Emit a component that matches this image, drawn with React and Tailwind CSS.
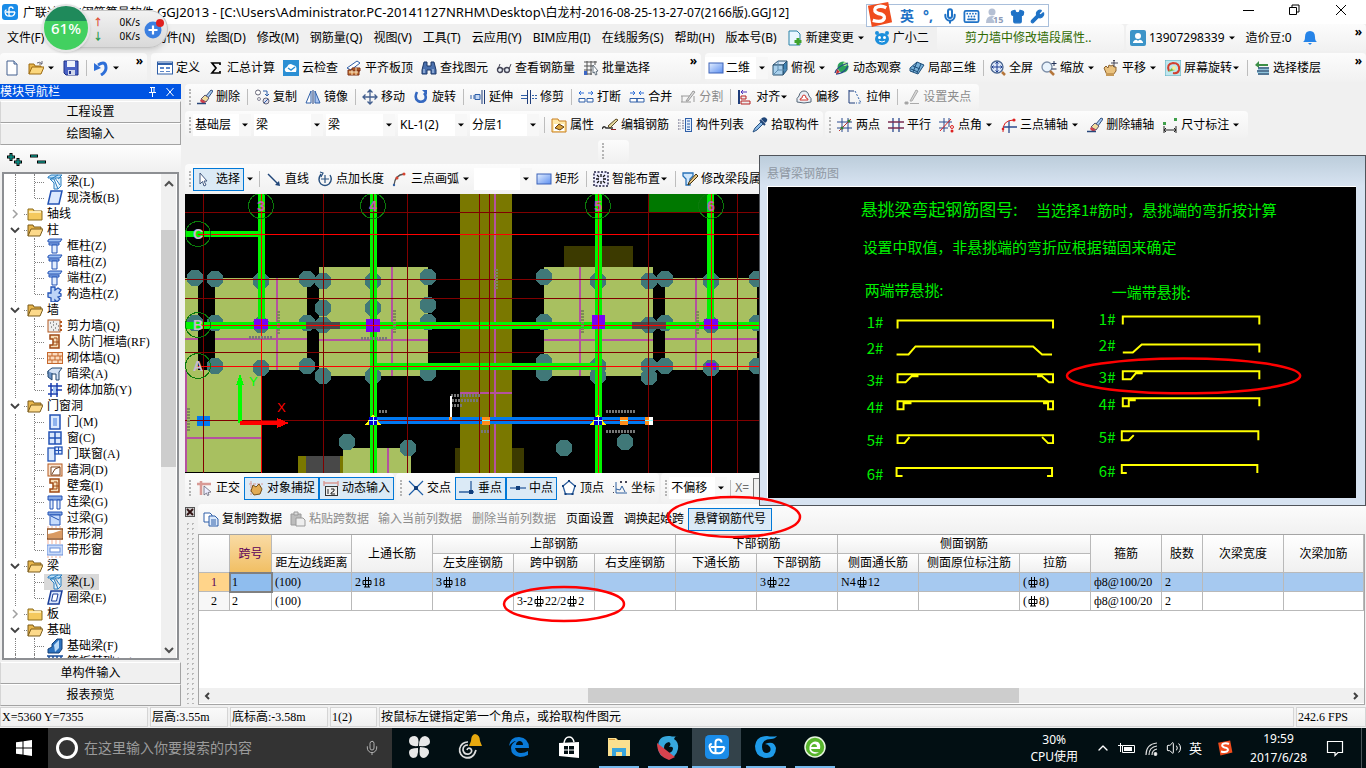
import React, { useState } from 'react';
import { Mic, Keyboard, Shirt, Wrench, Volume2, ChevronUp } from 'lucide-react';

const B = '#2f5fa8';
const N = '#1f3d7a';

// 16x16 toolbar drawings
const icons = {
    app: <><rect width="16" height="16" rx="3" fill="#1a8ce8" /><path d="M7 12V5q0-2 2-2t2 2M4 8h9M3 8q0-2 1.500-2M3 8q1 5 5 4 4 1 5-4" stroke="#fff" strokeWidth="1.300" fill="none" /></>,
    page: <><path d="M3 1h7l3 3v11H3z" fill="#fff" stroke="#44618f" /><path d="M10 1v3h3" fill="#cfe0f5" stroke="#44618f" /></>,
    open: <><path d="M1 14V4h5l1 2h6v2" fill="#e8b64c" stroke="#9c6a12" /><path d="M1 14l3-7h12l-3 7z" fill="#fbd77d" stroke="#9c6a12" /><path d="M9 3q3-2 5 1M14 1v3h-3" stroke="#667" fill="none" /></>,
    save: <><path d="M1 1h14v14H3l-2-2z" fill="#4a62c4" stroke="#1d2f85" /><path d="M4 1h8v6H4z" fill="#eef2fb" /><path d="M5 10h7v5H5z" fill="#cfd6ea" /><path d="M6 11h2v3H6z" fill="#26358c" /></>,
    undo: <><path d="M5 5q8-5 8 3 0 4-5 7" fill="none" stroke="#2e6fd8" strokeWidth="3" /><path d="M1 3v8l7-3z" fill="#2e6fd8" /></>,
    define: <><rect x=".5" y="2" width="15" height="12" fill="#fff" stroke={B} /><path d="M1 3h14v2H1z" fill={B} /><path d="M3 7h4v2H3zM3 11h4v1H3zM9 7h4v2H9zM9 11h4v1H9z" fill="#5b86c9" /></>,
    sigma: <path d="M12 5V3H4l4 5-4 5h8v-2" fill="none" stroke="#000" strokeWidth="1.700" />,
    cloud: <><rect width="16" height="16" fill="#2b8fd4" /><path d="M3 12q-3-3 1-5 2-5 6-2 5 1 3 7z" fill="#fff" /><path d="M5 8l3 2 4-3" stroke="#2b8fd4" strokeWidth="1.500" fill="none" /></>,
    align: <><path d="M1 8L11 1l3 2-9 7z" fill="#fff" stroke={B} /><path d="M2 10h11v5H2zM6 8h8v3H6z" fill="#c87a3c" stroke="#7a2d10" /><path d="M3 12h9M6 10v5M10 8v7" stroke="#fbe3bd" /></>,
    find: <><path d="M3 2h3v4h4V2h3l2 8v4h-5v-4H6v4H1v-4z" fill="#4a70ad" stroke="#1b3766" /><path d="M3 9v4M12 9v4" stroke="#c8daf4" /></>,
    glasses: <><circle cx="4" cy="10" r="2.500" fill="#e6edf5" stroke="#445" strokeWidth="1.400" /><circle cx="11" cy="10" r="2.500" fill="#e6edf5" stroke="#445" strokeWidth="1.400" /><path d="M6 9h3M2 9L4 4M13 9l2-5" stroke="#445" fill="none" /></>,
    batch: <><path d="M1 2h13M1 6h9M1 10h8M1 14h8M4 1v14M8 1v14M12 1v4" stroke="#555" /><path d="M1 11h3v4H1z" fill="#3b66c4" /><path d="M10 5l5 6-2 .500 1 3-1.500.500-1-3-1.500 1z" fill="#fff" stroke="#456" strokeWidth=".8" /></>,
    rect: <><defs><linearGradient id="rg" x1="0" y1="0" x2="1" y2="1"><stop offset="0" stopColor="#e4efff" /><stop offset="1" stopColor="#5d8ff0" /></linearGradient></defs><rect x="1" y="3" width="14" height="10" fill="url(#rg)" stroke="#3d63b8" /></>,
    cube: <><path d="M1 5l5-4h9l-4 4z" fill="#dcebfa" stroke="#28506f" /><path d="M11 5l4-4v9l-4 5z" fill="#3f83b5" stroke="#28506f" /><path d="M1 5h10v10H1z" fill="#a9d0ec" stroke="#28506f" /><path d="M6 1v9h9M6 10l-5 5" stroke="#5f8db0" fill="none" /></>,
    orbit: <><circle cx="9" cy="7" r="5.500" fill="#2ca35a" /><circle cx="11" cy="4" r="2" fill="#bdf0a0" /><path d="M1 13q1-6 13-10M2 14q8 0 12-8" stroke="#274a8a" fill="none" strokeWidth="1.300" /><path d="M3 9l3 3-4 2z" fill="#c33" /></>,
    local3d: <><path d="M1 8l7-6 7 3-6 9-8-3z" fill="#78b0d8" stroke="#1e4e79" /><path d="M4 6l7 3M8 2l-4 10M12 4L8 13M2 9l7 3" stroke="#1e4e79" /></>,
    full: <><circle cx="7" cy="7" r="6" fill="#dfeafa" stroke="#4a6590" strokeWidth="1.300" /><path d="M12 12l3 3" stroke="#b5763b" strokeWidth="2.500" /><path d="M7 2v10M2 7h10M5.500 3.500L7 2l1.500 1.500M5.500 10.500L7 12l1.500-1.500M3.500 5.500L2 7l1.500 1.500M10.500 5.500L12 7l-1.500 1.500" stroke="#1e3f94" fill="none" /></>,
    zoom: <><circle cx="6" cy="7" r="5" fill="#e9f3fc" stroke="#7d8fa8" strokeWidth="1.300" /><path d="M9 11l4 4" stroke="#b5763b" strokeWidth="2.500" /><path d="M13 1v5M10.500 3.500h5M10.500 9h5" stroke="#1f2e55" /></>,
    pan: <><path d="M1 8l2-2 2 2 1-3 2 1 2-1 1 2 2 0v4l-3 4H4z" fill="#eac27e" stroke="#8d6330" /><path d="M3 13h8v3H3z" fill="#c79a58" /><path d="M11 0v7M8 3h7M10 1l1-1 1 1" stroke="#445" fill="none" /></>,
    spin: <><rect width="16" height="16" fill="#bfe6ee" stroke="#5aaebf" /><path d="M4 11q-3-7 4-8 7 0 6 7-1 4-6 3" fill="none" stroke="#d3402f" strokeWidth="2" /><path d="M3 12l5-5 2 3z" fill="#78b83b" /><circle cx="9" cy="8" r="2" fill="#f7ee9a" /></>,
    floors: <><path d="M1 5l4-4v3h9v2H5v2z" fill="#3d8f47" /><path d="M4 8h11M3 11h12M4 14h11" stroke="#1f4f77" strokeWidth="1.600" /><path d="M4 9.500h11M3 12.500h12" stroke="#8fc4dc" /></>,
    erase: <><path d="M9 7l5-6 2 1-5 7z" fill="#a9c9ef" stroke="#32517f" /><path d="M4 10l4-4 4 3-3 4z" fill="#f1dc9c" stroke="#5a5470" /><path d="M4 10l-1 2 3 3 3-2z" fill="#d3404a" /><path d="M0 14.500h9" stroke="#28477a" strokeWidth="1.500" /></>,
    copy: <><circle cx="4" cy="3.500" r="2.500" fill="#fff" stroke="#667" /><circle cx="12" cy="12" r="3" fill="#dde" stroke="#667" /><circle cx="5" cy="10" r="1.500" fill="none" stroke="#889" /><path d="M9 2h4v4M11 5l2 2 2-2M14 10l-4 4" stroke={B} fill="none" /></>,
    mirror: <><path d="M6 2v12H1z" fill="#fff" stroke={B} /><path d="M10 2v12h5z" fill="#a9c4f0" stroke={B} /><path d="M8 1v14" stroke={N} /></>,
    move: <><path d="M8 1v14M1 8h14M5.500 3.500L8 1l2.500 2.500M5.500 12.500L8 15l2.500-2.500M3.500 5.500L1 8l2.500 2.500M12.500 5.500L15 8l-2.500 2.500" stroke="#435f8f" strokeWidth="1.300" fill="none" /></>,
    rotate: <><path d="M4 3Q1 9 5 12q4 2 7-1 2-4-1-7" fill="none" stroke="#3568c0" strokeWidth="2.600" /><path d="M9 1h5v5z" fill="#3568c0" /></>,
    extend: <><path d="M0 7h8M0 9h8" stroke={B} strokeDasharray="2 1" /><path d="M5 5.500h5v5H5z" fill="#c4d8f5" stroke={B} /><path d="M12 1v14M14.500 1v14" stroke={N} /></>,
    trim: <><path d="M0 6.500h7M0 9.500h7" stroke={B} /><path d="M6.500 1v14M9.500 1v14" stroke={N} /><path d="M11 6.500h5M11 9.500h5" stroke={B} strokeDasharray="2 1" /></>,
    brk: <><path d="M1 4h5M10 4h5M3 2L1 4l2 2M13 2l2 2-2 2" stroke="#2e6fd8" fill="none" /><path d="M1 9.500h6v3.500H1zM9 9.500h6v3.500H9z" fill="#fff" stroke={B} /></>,
    join: <><path d="M1 4h5M10 4h5M4 2l2 2-2 2M12 2l-2 2 2 2" stroke="#2e6fd8" fill="none" /><path d="M1 9.500h7v3.500H1zM8 9.500h7v3.500H8z" fill="#fff" stroke={B} /></>,
    split: <><path d="M1 7h9M1 13h10M2 7v6M14 7v6" stroke="#9a9a9a" /><path d="M6 12l7-10 2 1-7 9z" fill="#ddd" stroke="#9a9a9a" /></>,
    alignL: <><path d="M2 1v14" stroke={N} strokeWidth="2" /><path d="M4 3h6M6 1L4 3l2 2" stroke="#4a2fb8" fill="none" /><path d="M4 7h5v3H4zM4 12h9v3H4z" fill="#eee" stroke="#b52020" /></>,
    offset: <><path d="M8 2q4 0 5 5 3 2 2 6-7 2-14 0Q0 9 3 7q1-5 5-5z" fill="#e9eef5" stroke="#567" /><path d="M8 6q2 0 2 3 2 0 2 2H4q0-2 2-2 0-3 2-3z" fill="#fff" stroke="#d0342c" /></>,
    stretch: <><path d="M2 1v13h6M2 2h5" stroke={N} fill="none" /><path d="M8 2l6 12H9" stroke={B} strokeDasharray="2 1.500" fill="none" /></>,
    grip: <><path d="M6 12L12 1l2 1-6 10z" fill="#d8d8d8" stroke="#aaa" /><path d="M1 13h3v2H1zM6 14.500h9" fill="#999" stroke="#aaa" /></>,
    prop: <><path d="M1 2h6l1 2h7v11H1z" fill="#ffe9a8" stroke="#c87e20" /><path d="M3 7h10v7H3z" fill="#fff" /><path d="M4 11l4-4 5 3-4 3z" fill="#d8a23c" stroke="#5f3d10" /></>,
    editbar: <><path d="M0 12q2-4 4-1h7" stroke="#333" strokeWidth="1.500" fill="none" /><path d="M6 9L14 2l2 1-8 8z" fill="#e5d9a0" stroke="#5b4a23" /><path d="M9 12.500h5" stroke="#8b2020" /></>,
    list: <><path d="M1 3h3M1 6h3M1 9h3M1 12h3M6 3v10" stroke="#557" strokeDasharray="1.500 1" /><rect x="8.500" y="1.500" width="6" height="13" fill="#e2edfb" stroke={B} /><path d="M10 4h3M10 7h3M10 10h3M10 12.500h3" stroke={B} /></>,
    pick: <><path d="M10 1q3-2 5 1 1 2-2 4l-4-4z" fill="#1f4578" /><path d="M8 3l5 5" stroke="#1f4578" strokeWidth="2" /><path d="M9 5l2 2-6 6-4 2 2-4z" fill="#8ab9e6" stroke="#28507f" /></>,
    twopt: <><path d="M5 1v14M11 1v14M0 5h15M0 11h15" stroke="#2b4a8f" /><path d="M2 14L14 2" stroke="#b33" /><circle cx="5" cy="11" r="1.500" fill="#3a7a30" /><circle cx="12" cy="4" r="1.500" fill="#3a7a30" /></>,
    parallel: <><path d="M5 1v14M11 1v14" stroke="#2b4a8f" strokeWidth="1.300" /><path d="M0 5h16M0 11h16" stroke="#7a2d50" strokeWidth="1.300" /></>,
    ptangle: <><path d="M5 1v14M10 1v9M0 5h13M0 11h9" stroke="#2b4a8f" /><path d="M1 14L12 2" stroke="#d22" /><circle cx="13" cy="10" r="1.500" fill="none" stroke="#d22" /><circle cx="13" cy="14" r="1.500" fill="#d22" /></>,
    arc3: <><path d="M8 4v12M2 10h14" stroke="#2b4a8f" strokeWidth="1.300" /><path d="M2 15Q1 3 13 3" stroke="#d22" fill="none" /><circle cx="13" cy="3" r="1.600" fill="#d22" /><circle cx="2" cy="12" r="1.300" fill="#d22" /></>,
    dim: <><path d="M2 9v7M14 9v7M2 13h12M4 11l-2 2 2 2M12 11l2 2-2 2" stroke="#222" fill="none" /><path d="M1 5h3v3H1zM12 1h3v3h-3z" fill="#3fa04a" /></>,
    cursor: <path d="M3 2v11l2.500-2.500L7 15l2-1-2-4h3z" fill="#fff" stroke="#445a80" />,
    line: <><path d="M2 3l10 10" stroke="#1f4578" strokeWidth="1.400" /><path d="M14 15l-5-1 4-4z" fill="#1f4578" /></>,
    ptlen: <><path d="M4 3Q0 9 4 13q4 3 8 0 4-4 1-9" fill="none" stroke="#28507f" strokeWidth="1.400" /><path d="M8 4v8M4 8h8M3 1l3 1-2 4" stroke="#28507f" fill="none" strokeWidth="1.200" /></>,
    arcdraw: <><path d="M2 14Q3 4 12 3" fill="none" stroke="#555" strokeWidth="1.300" /><circle cx="12" cy="3" r="1.500" fill="#d8432f" /><circle cx="5" cy="7" r="1.500" fill="#d8432f" /><circle cx="2" cy="14" r="1.200" fill="#335f9f" /></>,
    smart: <><rect x="1" y="1" width="14" height="14" fill="#eef" stroke="#224" strokeWidth="1.500" strokeDasharray="2 1.500" /><path d="M4 4l2 2M12 4l-2 2M4 12l2-2M12 12l-2-2M8 3v3M8 10v3M3 8h3M10 8h3" stroke="#111" strokeWidth="1.300" /></>,
    beamedit: <><path d="M1 2h10v3L8 8v6H4V8L1 5z" fill="#cfe6fb" stroke="#2872b8" strokeWidth="1.300" /><path d="M7 11l7-8 2 2-7 7-3 2z" fill="#e8c784" stroke="#44320e" /></>,
    ortho: <><path d="M4 1v14M0 4h14" stroke="#d99a95" strokeWidth="2.500" /><path d="M7 6l7 6-3 .5 1 2.500-1.500.500-1-2.500L7 15z" fill="#eef" stroke="#667" strokeWidth=".8" /></>,
    snap: <><path d="M1 4h14M3 1v14" stroke="#d99a95" strokeDasharray="3 1" /><path d="M5 5l3 2 3-3 3 5-2 5-6 1-3-4z" fill="#e3ac55" stroke="#76501b" /></>,
    dyn: <><path d="M1 1v5M15 1v5M1 3h14" stroke="#d99a95" strokeWidth="1.500" /><rect x="2.500" y="6.500" width="12" height="9" fill="#eee" stroke="#333" /><path d="M5 9v5M8 9h3v2l-3 2v1h4" stroke="#222" fill="none" /></>,
    cross: <><path d="M1 1l14 14M15 1L1 15" stroke="#1f5fa8" strokeWidth="1.200" /><path d="M6 6h4v4H6z" fill="#123f7c" /></>,
    perp: <><path d="M0 12h15M12 1v11" stroke="#2d5f9f" strokeWidth="1.300" /><path d="M10 10h4v4h-4z" fill="#123f7c" /></>,
    mid: <><path d="M0 8h16" stroke="#2d5f9f" strokeWidth="1.300" /><path d="M6 6h4v4H6z" fill="#123f7c" /></>,
    vertex: <><path d="M8 1l6 5-2.500 8h-7L2 6z" fill="#fff" stroke="#2d5f9f" strokeWidth="1.300" /><path d="M7 0h2v2H7zM1 5h2v2H1zM13 5h2v2h-2zM3.500 13h2v2h-2zM10.500 13h2v2h-2z" fill="#123f7c" /></>,
    coord: <><path d="M4 2v11h11M4 9l4 1 2-4 3 6" stroke="#2d5f9f" fill="none" /><path d="M8 1l2 2M10 1L8 3M13 1l2 2M15 1l-2 2M1 6l1 1M1 12l1 1" stroke="#445" /></>,
    copydoc: <><path d="M1 2h6l2 2v7H1z" fill="#fff" stroke="#2f5fa8" /><path d="M6 5h6l3 3v7H6z" fill="#dbe9fb" stroke="#2f5fa8" /><path d="M8 9h5M8 11h5M8 13h5" stroke="#2f5fa8" /></>,
    paste: <><path d="M1 3h10v11H1z" fill="#bdbdbd" stroke="#9a9a9a" /><path d="M4 1h4v3H4z" fill="#ddd" stroke="#9a9a9a" /><path d="M6 7h7l2 2v6H6z" fill="#eee" stroke="#9a9a9a" /></>,
    newdoc: <><path d="M2 1h8l3 3v11H2z" fill="#e9f7ff" stroke="#2b83a8" /><path d="M11 8v7M7.500 11.500h7" stroke="#3fa32c" strokeWidth="3" /></>,
    robot: <><ellipse cx="8" cy="9" rx="7" ry="6" fill="#1c8fdc" /><circle cx="3" cy="3" r="2" fill="#1c8fdc" /><circle cx="13" cy="3" r="2" fill="#1c8fdc" /><circle cx="5.500" cy="7.500" r="1.500" fill="#fff" /><circle cx="10.500" cy="7.500" r="1.500" fill="#fff" /><path d="M5 11q3 2 6 0" stroke="#fff" fill="none" /></>,
    user: <><rect width="16" height="16" rx="2" fill="#3c94c8" /><circle cx="8" cy="6" r="3" fill="#fff" /><path d="M3 12q2-3 4-2l1 1 1-1q2-1 4 2v1H3z" fill="#fff" /></>,
    bell: <><path d="M8 1q5 0 5 6 0 4 2 5H1q2-1 2-5 0-6 5-6z" fill="#2684e8" /><path d="M6 13h4l-2 2z" fill="#2684e8" /></>,
    // tree
    folder: <><path d="M1 3h5l1 2h8v9H1z" fill="#f4c95d" stroke="#8a6a1c" /><path d="M2 6h12" stroke="#fdeab0" strokeWidth="2" /></>,
    folderOpen: <><path d="M1 14V3h5l1 2h7v2" fill="#e8b64c" stroke="#7a5b1a" /><path d="M1 14l3-7h12l-3 7z" fill="#fcd98a" stroke="#7a5b1a" /></>,
    beam: <><path d="M1 3l3-2h11l-3 3H1z" fill="#bfe2fa" stroke="#2b7fc0" /><path d="M3 5h4l4 10H7V9zM11 5l3-2v9l-3 3" fill="#dff1fd" stroke="#2b7fc0" /><path d="M4 5l7-4M8 4l5 7" stroke="#2b7fc0" /></>,
    slab: <path d="M4 1h11l-3 13H1z" fill="#dbe8fd" stroke="#2353b5" strokeWidth="1.500" />,
    column: <><path d="M1 2l2-1h12l-2 3H1zM2 5h10v2H2z" fill="#9ec0f2" stroke="#2353b5" /><path d="M5 7h5v8H5z" fill="#e2edfd" stroke="#2353b5" /></>,
    gear: <path d="M4 1h4v3l3-2 3 2-2 3 2 1v2l-3 1 2 2-3 3-2-2v2H4v-4L1 11V7l3 0z" fill="#bdd5f7" stroke="#2353b5" strokeWidth="1.300" />,
    shear: <><rect x="1" y="2" width="12" height="12" fill="#eee" stroke="#b4581e" /><path d="M3 5h1M6 4h1M9 6h1M4 9h1M8 10h1M6 12h1M11 8h1M11 12h1M6 7h1" stroke="#444" /><path d="M13 4h2M13 8h2M13 12h2" stroke="#b4581e" strokeWidth="2" /></>,
    frame: <><path d="M3 1h9v13H3v-3h3V5H3z" fill="#f7dfba" stroke="#a04a14" strokeWidth="1.500" /><path d="M7 4h3v7H7M6 8h6" fill="none" stroke="#a04a14" /></>,
    brick: <><rect x=".5" y="2.500" width="15" height="11" fill="#fbdcc0" stroke="#c5682d" /><path d="M1 6h14M1 10h14M5 2v4M11 2v4M8 6v4M3 6v4M13 6v4M5 10v4M11 10v4" stroke="#c5682d" /></>,
    hidden: <><path d="M1 5l4-3h10l-3 4v8H9V8H1z" fill="#d5e3f5" stroke="#23466f" /><path d="M1 5v6l4 3V7" fill="#6f95c6" stroke="#23466f" /></>,
    rebar: <><path d="M1 4h14M1 12h10M4 1v14M10 1v14M4 8h11" stroke="#1a3fb0" strokeWidth="1.500" /><path d="M6 5h3v6H6z" fill="#aacaf7" /></>,
    door: <><rect x="3" y="1" width="10" height="14" fill="#dbe9fd" stroke="#2353b5" strokeWidth="1.500" /><rect x="6" y="4" width="4" height="8" fill="#8db2ee" /></>,
    win: <><rect x="2" y="2" width="12" height="12" fill="#dbe9fd" stroke="#2353b5" strokeWidth="1.500" /><path d="M8 2v12M2 8h12" stroke="#2353b5" strokeWidth="1.500" /></>,
    doorwin: <><rect x="1" y="2" width="7" height="13" fill="#dbe9fd" stroke="#2353b5" strokeWidth="1.300" /><rect x="8" y="1" width="7" height="7" fill="#dbe9fd" stroke="#2353b5" strokeWidth="1.300" /><path d="M11.500 1v7M8 4.500h7" stroke="#2353b5" /></>,
    hole: <><rect x="1" y="2" width="14" height="12" fill="#fbe5d0" stroke="#b4581e" /><path d="M4 5h9v8H4z" fill="#fff" stroke="#7a4520" /><path d="M5 12l3-5 5-2" stroke="#7a4520" fill="none" /></>,
    link: <><path d="M1 2h14v4H1z" fill="#86a9e4" stroke="#2353b5" /><path d="M3 6h3v9H3zM10 6h3v9h-3z" fill="#e2edfd" stroke="#2353b5" /></>,
    lintel: <><path d="M1 2h14v3H1z" fill="#86a9e4" stroke="#2353b5" /><path d="M3 5h10v10H3z" fill="#c8dcfb" stroke="#2353b5" /><path d="M4 6l8 4" stroke="#2353b5" /></>,
    striphole: <><rect x="0" y="3" width="16" height="10" fill="#fff" stroke="#8a4a18" strokeWidth="1.500" /><path d="M1 12V8l5-1 9-3v8z" fill="#d99a63" /><path d="M0 1h16M0 15h16" stroke="#f2b09a" strokeDasharray="2 2" /></>,
    stripwin: <><rect x="0" y="3" width="16" height="10" fill="#c9dbfa" stroke="#6b8fd8" /><rect x="3" y="6" width="10" height="4" fill="#fff" stroke="#6b8fd8" /><path d="M0 1h16M0 15h16" stroke="#f2b09a" strokeDasharray="2 2" /></>,
    ring: <><path d="M4 1h11l-3 13H1z" fill="#dbe8fd" stroke="#1b3f9a" strokeWidth="1.500" /><path d="M6 4h5l-1.500 7H4.500z" fill="#fff" stroke="#1b3f9a" /></>,
    fbeam: <><path d="M1 15v-4l4-2V6l5-5h5v10l-3 4z" fill="#2d72bd" stroke="#153f77" /><path d="M7 7l5-5v8l-4 4z" fill="#b9d9f6" /></>,
    raft: <><path d="M0 2h16M0 6h16M2 2v8M6 2v8M10 2v8M14 2v8" stroke="#1b4f9a" strokeWidth="1.500" /></>,
};

function Ico({ n, className = 'size-4' }) {
    return <svg viewBox="0 0 16 16" className={`${className} shrink-0`} aria-hidden="true">{icons[n]}</svg>;
}

function Arrow() {
    return <svg viewBox="0 0 8 8" className="size-2 shrink-0" aria-hidden="true"><path d="M1 2.500h6L4 5.500z" fill="#000" /></svg>;
}

function Sep() {
    return <span className="w-px h-4 bg-[#bdbdbd] ml-[3px] mr-0.5 shrink-0" />;
}

function Grip() {
    return <span className="w-0.5 h-4 ml-1 mr-0.5 shrink-0 border-l-2 border-dotted border-[#b5b5b5]" />;
}

function Tool({ icon, label, arrow, tight, disabled, active }) {
    return (
        <button
            disabled={disabled}
            aria-label={label || icon}
            className={`flex items-center h-[23px] gap-[3px] shrink-0 whitespace-nowrap ${active ? 'bg-[#dbeaf6] border border-[#0078d7] px-[3px]' : 'px-1'} ${disabled ? 'text-[#8c8c8c]' : ''}`}
        >
            {icon && <Ico n={icon} />}
            <span className={label ? 'flex items-center' : 'hidden'}>{label}{arrow && tight && <Arrow />}</span>
            {arrow && !tight && <Arrow />}
        </button>
    );
}

function Combo({ label, value, className, icon }) {
    return (
        <div className={`relative flex items-center h-[22px] bg-white shrink-0 ${className}`}>
            {icon && <span className="pl-[3px]"><Ico n={icon} /></span>}
            <select aria-label={label} className="appearance-none bg-transparent w-full h-full pl-0.5 outline-none">
                <option>{value}</option>
            </select>
            <span className="absolute right-0 inset-y-0 w-3 bg-[#f7f7f7] flex items-center justify-center pointer-events-none"><Arrow /></span>
        </div>
    );
}

const bar = 'flex items-center bg-linear-to-b from-[#fcfcfc] to-[#f1f1f1] rounded-sm';

function More() {
    return <button aria-label="更多" className="ml-auto self-start pr-1 text-[12px] leading-4 font-bold">»</button>;
}

const menus = ['绘图(D)', '修改(M)', '钢筋量(Q)', '视图(V)', '工具(T)', '云应用(Y)', 'BIM应用(I)', '在线服务(S)', '帮助(H)', '版本号(B)'];

// [level, icon, label, flag]
const tree = [
    [1, 'beam', '梁(L)'], [1, 'slab', '现浇板(B)', 'last'],
    [0, 'folder', '轴线'],
    [0, 'folderOpen', '柱'], [1, 'column', '框柱(Z)'], [1, 'column', '暗柱(Z)'], [1, 'column', '端柱(Z)'], [1, 'gear', '构造柱(Z)', 'last'],
    [0, 'folderOpen', '墙'], [1, 'shear', '剪力墙(Q)'], [1, 'frame', '人防门框墙(RF)'], [1, 'brick', '砌体墙(Q)'], [1, 'hidden', '暗梁(A)'], [1, 'rebar', '砌体加筋(Y)', 'last'],
    [0, 'folderOpen', '门窗洞'], [1, 'door', '门(M)'], [1, 'win', '窗(C)'], [1, 'doorwin', '门联窗(A)'], [1, 'hole', '墙洞(D)'], [1, 'frame', '壁龛(I)'], [1, 'link', '连梁(G)'], [1, 'lintel', '过梁(G)'], [1, 'striphole', '带形洞'], [1, 'stripwin', '带形窗', 'last'],
    [0, 'folderOpen', '梁'], [1, 'beam', '梁(L)', 'sel'], [1, 'ring', '圈梁(E)', 'last'],
    [0, 'folder', '板'],
    [0, 'folderOpen', '基础'], [1, 'fbeam', '基础梁(F)'], [1, 'raft', '筏板基础(M)'],
];

function TreeRow({ row }) {
    const [level, icon, label, flag] = row;
    if (level === 0) {
        const open = icon === 'folderOpen';
        return (
            <li className="flex items-center h-4">
                <svg viewBox="0 0 20 16" className="w-5 h-4 shrink-0">
                    {open
                        ? <path d="M7 6l4 4 4-4" fill="none" stroke="#404040" strokeWidth="1.800" />
                        : <path d="M9 4l4 4-4 4" fill="none" stroke="#a0a0a0" strokeWidth="1.500" />}
                </svg>
                <span className="w-[3px] border-b border-dotted border-[#808080]" />
                <Ico n={icon} />
                <span className="pl-1">{label}</span>
            </li>
        );
    }
    return (
        <li className="flex items-center h-4">
            <span className="w-3 h-4 border-r border-dotted border-[#808080] shrink-0" />
            <span className={`w-[19px] border-r border-dotted border-[#808080] shrink-0 ${flag === 'last' ? 'h-2 self-start' : 'h-4'}`} />
            <span className="w-[9px] border-b border-dotted border-[#808080] shrink-0" />
            <span className={`flex items-center h-4 gap-1 px-[3px] whitespace-nowrap ${flag === 'sel' ? 'bg-[#d9d9d9] pr-[5px]' : ''}`}>
                <Ico n={icon} />{label}
            </span>
        </li>
    );
}

function NavButton({ children }) {
    return <button className="h-[22px] shrink-0 w-full border border-[#a3a3a3] border-t-white border-l-[#d5d5d5] bg-[#f0f0f0] text-center leading-5">{children}</button>;
}

function Sidebar() {
    return (
        <aside className="w-[181px] shrink-0 flex flex-col">
            <div className="h-[15px] mb-0.5 shrink-0 bg-[#0054e3] text-white flex items-center">
                <span className="flex-1">模块导航栏</span>
                <svg viewBox="0 0 30 12" className="w-[30px] h-3 mr-1" stroke="#fff" fill="none">
                    <path d="M3 1.500h5M4.500 1.500v5M7 1v6M2 6.500h7M5.500 7v4M19.500 2l7 8M26.500 2l-7 8" />
                </svg>
            </div>
            <NavButton>工程设置</NavButton>
            <NavButton>绘图输入</NavButton>
            <div className="h-[27px] shrink-0 flex items-center pl-1.5 bg-linear-to-b from-[#fdfdfd] to-[#f0f0f0]">
                <svg viewBox="0 0 42 18" className="w-[42px] h-[18px]">
                    <path d="M5 3v8M1 7h8M12 8v8M8 12h8M24 6h8M31 12h9" stroke="#000" strokeWidth="3" />
                    <path d="M5 4v6M2 7h6M12 9v6M9 12h6M25 6h6M32 12h7" stroke="#0d8f84" strokeWidth="1.500" />
                </svg>
            </div>
            <div className="flex-1 min-h-0 ml-0.5 mr-0.5 mb-0.5 border-2 border-[#8d8f93] bg-white flex overflow-hidden">
                <ul className="flex-1 min-w-0 overflow-hidden [font-family:'Liberation_Serif','Noto_Sans_CJK_SC',serif]">
                    {tree.map((row, i) => <TreeRow key={i} row={row} />)}
                </ul>
                <div className="w-[15px] bg-[#f0f0f0] flex flex-col items-center mr-px">
                    <svg viewBox="0 0 16 16" className="size-4 my-0.5"><path d="M4 10l4-4 4 4" fill="none" stroke="#505050" strokeWidth="2" /></svg>
                    <div className="mt-[36px] h-[237px] w-full bg-[#cdcdcd]" />
                    <svg viewBox="0 0 16 16" className="size-4 mt-auto"><path d="M4 6l4 4 4-4" fill="none" stroke="#505050" strokeWidth="2" /></svg>
                </div>
            </div>
            <NavButton>单构件输入</NavButton>
            <NavButton>报表预览</NavButton>
        </aside>
    );
}

// Floor plan
const slabs = [[185, 278, 13, 92], [215, 278, 92, 92], [319, 267, 109, 109], [185, 370, 76, 102], [343, 448, 68, 25], [544, 267, 109, 109], [665, 278, 92, 92]];
const piles = [
    [195, 278], [215, 279], [261, 281], [307, 279], [323, 281], [373, 281], [428, 277], [323, 308], [373, 308], [428, 305],
    [195, 323], [215, 323], [261, 325], [307, 323], [323, 325], [428, 322], [215, 366], [261, 368], [307, 366], [323, 376],
    [373, 376], [428, 373], [347, 442], [408, 448], [544, 277], [598, 281], [649, 281], [665, 279], [711, 281], [757, 279],
    [544, 322], [649, 325], [665, 323], [711, 325], [757, 323], [544, 362], [544, 373], [598, 366], [598, 376], [649, 366],
    [649, 377], [665, 366], [711, 368], [757, 366], [564, 448], [625, 442],
];
const axes = [[261, 206, '3'], [373, 206, '4'], [598, 206, '5'], [711, 206, '6'], [198, 234, 'C'], [198, 325, 'B'], [198, 366, 'A']];

function Canvas() {
    return (
        <svg viewBox="185 194 1181 279" preserveAspectRatio="xMinYMin slice" className="block w-full h-full bg-black" shapeRendering="crispEdges">
            <rect x="460" y="194" width="52" height="279" fill="#7a7800" />
            <path d="M564 246h69v21h-69zM455 448h5v25h-5zM512 448h12v25h-12z" fill="#3c3a00" />
            <path d="M298 456h51v17h-51z" fill="#7a7800" />
            <path d="M649 194h60v18h-60z" fill="#007800" />
            {slabs.map(([x, y, w, h], i) => <rect key={i} x={x} y={y} width={w} height={h} fill="#a8c060" />)}
            <path d="M306 456h34v17h-34z" fill="#484848" />
            {piles.map(([x, y], i) => <circle key={i} cx={x} cy={y} r="8.500" fill="#407878" />)}
            <path d="M277 278v92M392 267v109M186 370v102M388 448v25M495 194v279M580 267v109M696 278v92M185 339h13M215 339h92M319 340h109M544 340h109M665 339h92M185 438h76M460 393h52" stroke="#b4529f" strokeWidth="2" />
            <path d="M258 194h7v126h-7zM185 231h76v6h-76zM370 194h7v279h-7zM185 322h581v7H185zM377 363h221v7H377zM595 194h7v279h-7zM707 194h7v126h-7z" fill="#00f400" />
            <path d="M306 322h34v7h-34zM632 322h34v7h-34z" fill="#484848" />
            <path d="M254 319h14v10h-14zM366 319h14v13h-14zM592 315h13v14h-13zM704 319h14v10h-14zM706 363h10v3h-10zM713 366h3v4h-3z" fill="#7a00f5" />
            <path d="M373 417h272v7H373zM197 416h13v10h-13z" fill="#0078f0" />
            <path d="M203.500 194v279M323.500 194v279M373.500 194v279M407.500 194v279M479.500 194v279M489.500 194v279M648.500 194v279M737.500 194v279M185 212.500h581M185 279.500h581M185 298.500h581M185 352.500h581M185 420.500h581" stroke="#800000" />
            <path d="M261.500 194v279M598.500 194v279M711.500 194v279M198 234.500h568M198 325.500h568M198 366.500h568" stroke="#ff0000" />
            <path d="M278 311v24M394 310v24M582 310v24M697 311v24M496 269v20M188 408v24" stroke="#7c8a55" strokeWidth="3" strokeDasharray="2 1" />
            <path d="M249 337h24M361 338h26M451 395h30M452 400h26M451 405h12M379 411h9M606 411h29M606 431h29M481 431h9" stroke="#777" strokeWidth="3" strokeDasharray="2 1" />
            {axes.map(([x, y, t]) => (
                <g key={t}>
                    <circle cx={x} cy={y} r="12.500" fill="none" stroke="#0a7a0a" />
                    <text x={x} y={y + 5} textAnchor="middle" fontSize="14" fontWeight="700" fill={x < 200 ? '#c9b8d0' : '#c060b0'} fontFamily="Liberation Sans">{t}</text>
                </g>
            ))}
            <path d="M450.500 396v23" stroke="#fff" strokeWidth="2" />
            <path d="M482 417h8v8h-8zM620 417h8v8h-8zM645 417h4v8h-4zM449 417h3v3h-3z" fill="#ff8c1a" />
            <path d="M649 417h4v8h-4z" fill="#fff" />
            {[373, 598].map(x => (
                <g key={x}>
                    <path d={`M${x} 414l8 11h-16z`} fill="#ffff00" />
                    <path d={`M${x - 4} 417h8v8h-8z`} fill="#0000d8" />
                    <path d={`M${x + 0.5} 417v8M${x - 4} 420.500h8`} stroke="#b8f8ff" />
                </g>
            ))}
            <path d="M482 420.500h8M620 420.500h8M645 420.500h8" stroke="#8ff" />
            <path d="M238 385h-2l4-11 4 11h-2v38h-4z" fill="#00ff00" />
            <path d="M240 421h37v-3l12 5-12 5v-3h-37z" fill="#ff0000" />
            <text x="249" y="386" fontSize="13" fill="#00ff00" fontFamily="Liberation Sans">Y</text>
            <text x="277" y="412" fontSize="13" fill="#ff0000" fontFamily="Liberation Sans">X</text>
        </svg>
    );
}

// Cantilever rebar shapes
const barsLeft = [
    'M897 328v-8h156v8', 'M896 354h12l7-8h118l9 8h10',
    'M918 376h-7l-6 6h-8v-8h156v8h-4l-7-6h-5', 'M911 403h-8v6h-6v-8h156v8h-5v-6h-5',
    'M909 437l-5 6h-7v-8h156v8h-5l-6-6', 'M902 476h-6v-8h156v8h-5',
];
const barsRight = [
    'M1123 324v-8h137v8', 'M1123 352h10l9-8h118v8',
    'M1143 373h-7l-5 6h-8v-8h137v8', 'M1136 400h-7v6h-6v-8h137v8',
    'M1134 435l-5 5h-7v-9h137v9', 'M1127 473h-5v-8h136v8',
];
const yLeft = [327, 354, 386, 413, 446, 480];
const yRight = [324, 351, 383, 410, 443, 477];

function RebarDialog() {
    return (
        <section aria-label="悬臂梁钢筋图" className="absolute z-10 right-0 top-[155px] w-[607px] h-[351px] bg-[#d7e3f1] border border-[#50545a] pl-[7px] pr-[9px]">
            <h2 className="h-[30px] pt-2.5 text-[#8f98a3] -ml-[7px] -mr-[9px] px-[7px] bg-linear-to-b from-[#bccddb] to-[#d7e3f1]">悬臂梁钢筋图</h2>
            <svg viewBox="767 186 590 312" className="block w-full bg-black border-t border-l border-white">
                <g fill="#00f000" fontSize="15" className="[font-family:'Noto_Sans_CJK_SC',sans-serif]">
                    <text x="860" y="215" fontSize="17">悬挑梁弯起钢筋图号:</text>
                    <text x="1036" y="215">当选择1#筋时，悬挑端的弯折按计算</text>
                    <text x="862" y="252">设置中取值，非悬挑端的弯折应根据锚固来确定</text>
                    <text x="864" y="295">两端带悬挑:</text>
                    <text x="1112" y="297">一端带悬挑:</text>
                    {yLeft.map((y, i) => <text key={y} x="866" y={y}>{i + 1}#</text>)}
                    {yRight.map((y, i) => <text key={y} x="1099" y={y}>{i + 1}#</text>)}
                </g>
                <g fill="none" stroke="#ffff00" strokeWidth="2">
                    {barsLeft.map(d => <path key={d} d={d} />)}
                    {barsRight.map(d => <path key={d} d={d} />)}
                </g>
                <ellipse cx="1184" cy="375.500" rx="117" ry="17.500" fill="none" stroke="#ff0000" strokeWidth="2.500" />
            </svg>
        </section>
    );
}

// Grade III rebar sign
function Dia() {
    return (
        <svg viewBox="0 0 12 12" className="inline-block size-3 align-[-2px]" role="img" aria-label="三级钢">
            <path d="M2 4.500h8v4H2zM4.500 1v10M7.500 1v10M3 11h6" fill="none" stroke="currentColor" />
        </svg>
    );
}

const th = 'border-r border-b border-[#b9b9b9] bg-linear-to-b from-white to-[#f0f0f0] font-normal p-0 h-[19px] whitespace-nowrap overflow-hidden';
const rows = [
    ['1', '(100)', <>2<Dia />18</>, <>3<Dia />18</>, '', '', '', <>3<Dia />22</>, <>N4<Dia />12</>, '', <>(<Dia />8)</>, 'ф8@100/20', '2', '', ''],
    ['2', '(100)', '', '', <>3-2<Dia />22/2<Dia />2</>, '', '', '', '', '', <>(<Dia />8)</>, 'ф8@100/20', '2', '', ''],
];
const cols = ['w-[31px]', 'w-[42px]', 'w-[80px]', 'w-[81px]', 'w-[81px]', 'w-[81px]', 'w-[81px]', 'w-[81px]', 'w-[81px]', 'w-[81px]', 'w-[101px]', 'w-[71px]', 'w-[71px]', 'w-[41px]', 'w-[81px]', 'w-auto'];

function SpanTable() {
    return (
        <table className="w-full table-fixed border-separate border-spacing-0 leading-4">
            <colgroup>{cols.map((c, i) => <col key={i} className={c} />)}</colgroup>
            <thead>
                <tr>
                    <th rowSpan="2" className={th} aria-label="行号" />
                    <th rowSpan="2" className="border-r border-b border-[#b9b9b9] bg-linear-to-b from-[#f9dba4] to-[#f1bf63] font-normal text-[#5a005a] p-0">跨号</th>
                    <th className={th} aria-label="距离" />
                    <th rowSpan="2" className={th}>上通长筋</th>
                    <th colSpan="3" className={th}>上部钢筋</th>
                    <th colSpan="2" className={th}>下部钢筋</th>
                    <th colSpan="3" className={th}>侧面钢筋</th>
                    <th rowSpan="2" className={th}>箍筋</th>
                    <th rowSpan="2" className={th}>肢数</th>
                    <th rowSpan="2" className={th}>次梁宽度</th>
                    <th rowSpan="2" className={th}>次梁加筋</th>
                </tr>
                <tr>
                    {['距左边线距离', '左支座钢筋', '跨中钢筋', '右支座钢筋', '下通长筋', '下部钢筋', '侧面通长筋', '侧面原位标注筋', '拉筋'].map(t => (
                        <th key={t} className={th}>{t}</th>
                    ))}
                </tr>
            </thead>
            <tbody className="[font-family:'Liberation_Serif','Noto_Sans_CJK_SC',serif]">
                {rows.map((r, i) => (
                    <tr key={i} className={i === 0 ? 'bg-[#a6c9f0]' : 'bg-white'}>
                        <th className={`border-r border-b border-[#b9b9b9] font-normal p-0 h-[19px] ${i === 0 ? 'bg-[#ffd48a] text-[#5a005a]' : 'bg-[#f7f7f7]'}`}>{i + 1}</th>
                        {r.map((c, j) => (
                            <td
                                key={j}
                                className={`relative border-b border-r border-[#b9b9b9] p-0 whitespace-nowrap h-[19px] ${j === 0 ? 'pl-0.5' : 'pl-[3px]'} ${i === 0 && j === 0 ? 'z-10 outline-2 -outline-offset-1 outline-[#808080] bg-[#8fbdee]' : ''}`}
                            >
                                {c}
                                {i === 1 && j === 4 && (
                                    <svg viewBox="0 0 124 38" className="absolute z-20 -left-[12px] -top-[7px] w-[124px] h-[38px] max-w-none pointer-events-none">
                                        <ellipse cx="62" cy="19" rx="60" ry="17" fill="none" stroke="#ff0000" strokeWidth="2.500" />
                                    </svg>
                                )}
                            </td>
                        ))}
                    </tr>
                ))}
            </tbody>
        </table>
    );
}

function SpeedBall() {
    return (
        <div className="absolute z-30 left-[42px] top-1 flex items-center">
            <div className="absolute left-5 top-1.5 w-[106px] h-[38px] rounded-full bg-linear-to-b from-[#f2f2f2] to-[#d9d9d9] border border-[#c4c4c4] shadow-md flex items-center pl-[30px]">
                <div className="text-[10px] leading-[14px] w-[47px] shrink-0">
                    <div className="flex justify-between"><span className="text-[#e0523a] font-bold">↑</span>0K/s</div>
                    <div className="flex justify-between"><span className="text-[#2a9a4f] font-bold">↓</span>0K/s</div>
                </div>
                <svg viewBox="0 0 20 20" className="size-5 ml-1 shrink-0">
                    <circle cx="9" cy="11" r="8.500" fill="#3b7fe0" />
                    <path d="M9 6.500v9M4.500 11h9" stroke="#fff" strokeWidth="2.200" />
                    <circle cx="16" cy="4" r="4" fill="#e02020" />
                </svg>
            </div>
            <div className="relative size-12 rounded-full border-2 border-[#e4e4e4] shadow bg-linear-to-b from-[#1f8a5b] from-35% to-[#42d060] to-35% text-white text-[15px] flex items-center justify-center font-medium">61%</div>
        </div>
    );
}

function SogouMark({ className }) {
    return (
        <svg viewBox="0 0 28 28" className={className} role="img" aria-label="搜狗输入法">
            <path d="M2 5L23 1l4 21L6 27z" fill="#f04c1d" />
            <path d="M21 7q-6-3-11 0-3 4 3 6 7 1 6 5-2 5-12 2" fill="none" stroke="#fff" strokeWidth="3.500" />
        </svg>
    );
}

function ImeBar() {
    return (
        <div className="absolute z-30 left-[866px] top-px h-[26px] flex items-center">
            <div className="absolute inset-x-0 top-[3px] bottom-0 bg-white border border-[#a9bfdb]" />
            <SogouMark className="relative size-[27px]" />
            <div className="relative pt-1 flex items-center gap-[5px] pl-[7px] pr-1 text-[#1f72c6]">
                <span className="font-bold text-[14px]">英</span>
                <span className="font-bold text-[14px] pl-1 w-[18px]">°,</span>
                <Mic className="size-4" strokeWidth={3} />
                <Keyboard className="size-[17px]" strokeWidth={2.500} />
                <svg viewBox="0 0 20 16" className="w-5 h-4"><circle cx="7" cy="4" r="3.500" fill="#b5c0d4" /><path d="M1 15q0-7 6-7 4 0 5 3v4z" fill="#b5c0d4" /><text x="8" y="15" fontSize="9" fontWeight="700" fill="#8d9bb8" stroke="#fff" strokeWidth="2" paintOrder="stroke">15</text></svg>
                <Shirt className="size-[15px]" fill="currentColor" />
                <Wrench className="size-[15px]" fill="currentColor" />
            </div>
        </div>
    );
}

function TaskButton({ label, running, active, children }) {
    return (
        <button aria-label={label} className={`h-10 flex flex-col items-center shrink-0 ${running ? 'w-[49px]' : 'w-[50px]'} ${active ? 'bg-[#33424a]' : ''}`}>
            <span className="flex-1 flex items-center">{children}</span>
            <span className={`h-0.5 ${active ? 'w-full' : 'w-10'} ${running ? 'bg-[#76b9ed]' : ''}`} />
        </button>
    );
}

function Taskbar() {
    return (
        <footer className="h-10 shrink-0 flex bg-[#020f13] text-white">
            <button aria-label="开始" className="w-12 bg-black flex items-center justify-center">
                <svg viewBox="0 0 16 16" className="size-4" fill="#fff"><path d="M0 2.300l6.500-.900V7.500H0zM7.500 1.200L16 0v7.500H7.500zM0 8.500h6.500v6.100L0 13.700zM7.500 8.500H16V16l-8.500-1.200z" /></svg>
            </button>
            <div className="w-[344px] bg-[#333333] flex items-center pl-2 pr-3">
                <span className="size-[22px] rounded-full border-[3px] border-white shrink-0" />
                <input aria-label="搜索" placeholder="在这里输入你要搜索的内容" className="flex-1 min-w-0 pl-1.5 bg-transparent text-[14px] placeholder:text-[#9b9b9b] outline-none" />
                <Mic className="size-4 text-[#b0b0b0]" strokeWidth={1.500} />
            </div>
            <div className="flex pl-0.5">
                <TaskButton label="风扇">
                    <svg viewBox="0 0 24 24" className="size-6" fill="#e8e8e8"><path d="M11 11Q2 12 2 6q0-5 6-5 5 1 3 10zM12 11Q12 1 18 1q5 1 5 6 0 5-11 4zM13 12q10 0 9 6-2 5-6 5-5-1-3-11zM11 13q1 10-5 10-4-1-4-6 0-4 9-4z" /></svg>
                </TaskButton>
                <TaskButton label="提醒">
                    <svg viewBox="0 0 28 28" className="size-7"><path d="M13 9a8 8 0 1 0 7 11M13 12q-5 0-5 5 1 5 6 4 4-2 2-5-3-2-4 1M9 24q9 3 12-7" fill="none" stroke="#ddd" strokeWidth="1.700" /><path d="M20 1q5 1 5 7l2 5H14l2-5q0-6 4-7z" fill="#e8a90f" /></svg>
                </TaskButton>
                <TaskButton label="Edge">
                    <svg viewBox="0 0 22 22" className="size-[22px]"><path d="M1 10Q2 1 11 1q10 1 10 11H7q1 5 6 5 4 0 7-2v4q-4 2-8 2-9-1-9-9 0-4 5-7-3 0-7 5zm7-1h7q0-4-4-4-3 1-3 4z" fill="#0a7ad8" fillRule="evenodd" /></svg>
                </TaskButton>
                <TaskButton label="应用商店">
                    <svg viewBox="0 0 22 24" className="w-[22px] h-6"><path d="M1 8l20-1v16L1 21z" fill="#fff" /><path d="M6 8q1-6 5-6t5 5" fill="none" stroke="#fff" strokeWidth="1.500" /><path d="M6 11h4v3.500H6zM11 11h5v3.500h-5zM6 15.500h4V19H6zM11 15.500h5V19h-5z" fill="#020f13" /></svg>
                </TaskButton>
                <TaskButton label="资源管理器" running>
                    <svg viewBox="0 0 24 20" className="w-6 h-5"><path d="M1 1h8l2 2h12v16H1z" fill="#fbe08f" /><path d="M5 19v-8h14v8h-4v-4H9v4z" fill="#39a5dc" /><path d="M2 2h6v1H2z" fill="#d8993a" /></svg>
                </TaskButton>
                <TaskButton label="广联达更新" running>
                    <svg viewBox="0 0 26 26" className="size-[26px]"><path d="M23 2q-3 0-4 3 5 3 4 10-2 9-10 9Q3 23 3 13 3 1 15 2q4 1 8 0zM14 8q-5 1-5 6 1 5 5 5 4-1 4-5-1-2-4-1 3-3 0-5z" fill="#37a7dc" fillRule="evenodd" /><path d="M2 9l18 14-6 3Q2 22 2 9z" fill="#d8434e" /></svg>
                </TaskButton>
                <TaskButton label="钢筋算量" running active><Ico n="app" className="size-6" /></TaskButton>
                <TaskButton label="广联达" running>
                    <svg viewBox="0 0 26 26" className="size-[26px]"><path d="M24 2q-2 3-6 3-9 0-9 8 0 6 5 6 5-1 3-6-2-3-5-3 9-4 11 4 0 10-10 10Q2 23 2 12 3 2 14 2q6 1 10 0z" fill="#1e9be9" /></svg>
                </TaskButton>
                <TaskButton label="浏览器" running>
                    <svg viewBox="0 0 24 24" className="size-6"><circle cx="12" cy="12" r="10" fill="#58b52c" stroke="#e8f6df" strokeWidth="1.500" /><path d="M17 14H8q1 4 8 3-3 3-7 1-4-3-2-8 3-5 8-3 3 2 2 7zm-3-2q0-3-3-3-2 0-3 3z" fill="#fff" fillRule="evenodd" /></svg>
                </TaskButton>
            </div>
            <div className="ml-auto flex items-center gap-[7px]">
                <div className="text-center leading-[17px] mr-2.5"><div>30%</div><div>CPU使用</div></div>
                <ChevronUp className="size-4" />
                <svg viewBox="0 0 18 12" className="w-[18px] h-3"><path d="M4.500 3.500h12v7h-12z" fill="none" stroke="#fff" /><path d="M6 5h8v4H6z" fill="#fff" /><path d="M2.500 1v9M0 3.500h4" stroke="#fff" /></svg>
                <svg viewBox="0 0 16 16" className="size-4" fill="none" stroke="#ddd" strokeWidth="1.200"><path d="M3 15Q3 4 14 3M6 15q0-8 8-9M9 15q0-5 5-6" /><circle cx="12.500" cy="14" r="1.300" fill="#fff" /></svg>
                <Volume2 className="size-4" strokeWidth={1.500} />
                <span className="text-[13px]">英</span>
                <SogouMark className="size-4 ml-2 mr-2.5" />
                <div className="text-center leading-[19px]"><div>19:59</div><div>2017/6/28</div></div>
                <svg viewBox="0 0 18 18" className="size-[18px] ml-3 mr-2.5" fill="none" stroke="#fff" strokeWidth="1.200"><path d="M1.500 2.500h15v11H12l-3 3v-3H1.500z" /></svg>
                <span className="w-px h-10 bg-[#4a5559] mr-1" />
            </div>
        </footer>
    );
}

export default function App() {
    const [offset, setOffset] = useState('');
    const cell = 'flex items-center h-5 border border-[#d5d5d5] bg-linear-to-b from-[#fafafa] to-[#f0f0f0] pl-px whitespace-nowrap shrink-0';

    return (
        <div className="relative h-screen flex flex-col overflow-hidden bg-[#f0f0f0] text-black text-[12px] leading-4 [font-family:'Noto_Sans','Noto_Sans_CJK_SC',sans-serif]">
            <header className="h-6 shrink-0 bg-white flex items-center pl-0.5">
                <Ico n="app" />
                <h1 className="pl-[5px] flex-1 whitespace-nowrap">广联达BIM钢筋算量软件 <span className="text-[13px]">GGJ2013 - [C:\Users\Administrator.PC-20141127NRHM\Desktop\</span>白龙村-2016-08-25-13-27-07(2166版).GGJ12]</h1>
                <div className="flex gap-[34px] pr-[19px] pb-1">
                    {['M0 6.500h11', 'M.5 3.500h7v7h-7zM3 3V1h7v7H8', 'M1 1l10 10M11 1L1 11'].map((d, i) => (
                        <button key={d} aria-label={['最小化', '还原', '关闭'][i]}><svg viewBox="0 0 12 12" className="size-3" fill="none" stroke="#000"><path d={d} /></svg></button>
                    ))}
                </div>
            </header>

            <nav className="h-[27px] shrink-0 flex items-center">
                <div className="w-[937px] shrink-0 flex items-center gap-px pl-0.5">
                    <button className="px-[5px] whitespace-nowrap">文件(F)</button>
                    <button className="ml-[99px] px-[5px] whitespace-nowrap">构件(N)</button>
                    {menus.map(m => <button key={m} className="px-[5px] whitespace-nowrap">{m}</button>)}
                    <Tool icon="newdoc" label="新建变更" arrow />
                    <Tool icon="robot" label="广小二" />
                </div>
                <div className={`${bar} h-full w-[187px] shrink-0 pl-7`}><a href="#tip" className="text-[#2f6a00]">剪力墙中修改墙段属性..</a></div>
                <div className={`${bar} h-full flex-1 ml-0.5 gap-0.5`}>
                    <Tool icon="user" label="13907298339" arrow />
                    <Tool label="造价豆:0" />
                    <Tool icon="bell" />
                    <More />
                </div>
            </nav>

            <div className="h-[33px] shrink-0 flex gap-1 py-0.5">
                <div className={`${bar} w-[147px] shrink-0`}>
                    <Tool icon="page" /><Tool icon="open" arrow /><Tool icon="save" /><Sep /><Tool icon="undo" arrow /><More />
                </div>
                <div className={`${bar} w-[550px] shrink-0 pl-0.5`}>
                    <Tool icon="define" label="定义" /><Tool icon="sigma" label="汇总计算" /><Tool icon="cloud" label="云检查" />
                    <Tool icon="align" label="平齐板顶" /><Tool icon="find" label="查找图元" /><Tool icon="glasses" label="查看钢筋量" /><Tool icon="batch" label="批量选择" /><More />
                </div>
                <div className={`${bar} flex-1`}>
                    <Combo label="视图" value="二维" icon="rect" className="w-[63px]" />
                    <Tool icon="cube" label="俯视" arrow /><Tool icon="orbit" label="动态观察" /><Tool icon="local3d" label="局部三维" /><Sep />
                    <Tool icon="full" label="全屏" /><Tool icon="zoom" label="缩放" arrow /><Tool icon="pan" label="平移" arrow /><Tool icon="spin" label="屏幕旋转" arrow tight /><Sep />
                    <Tool icon="floors" label="选择楼层" /><More />
                </div>
            </div>

            <main className="flex-1 min-h-0 flex gap-1">
                <Sidebar />
                <div className="flex-1 min-w-0 flex flex-col">
                    <div className="h-[26px] shrink-0 flex">
                        <div className={`${bar} pr-1`}>
                            <Grip /><Tool icon="erase" label="删除" /><Sep /><Tool icon="copy" label="复制" /><Tool icon="mirror" label="镜像" /><Sep />
                            <Tool icon="move" label="移动" /><Tool icon="rotate" label="旋转" /><Sep /><Tool icon="extend" label="延伸" /><Tool icon="trim" label="修剪" /><Sep />
                            <Tool icon="brk" label="打断" /><Tool icon="join" label="合并" /><Tool icon="split" label="分割" disabled /><Sep />
                            <Tool icon="alignL" label="对齐" arrow tight /><Tool icon="offset" label="偏移" /><Tool icon="stretch" label="拉伸" /><Sep />
                            <Tool icon="grip" label="设置夹点" disabled />
                        </div>
                    </div>
                    <div className="h-7 shrink-0 flex pt-px gap-0.5">
                        <div className={bar}>
                            <Grip />
                            <div className="flex gap-[3px] pr-0.5">
                                <Combo label="楼层" value="基础层" className="w-[58px]" />
                                <Combo label="构件类型" value="梁" className="w-[69px]" />
                                <Combo label="构件" value="梁" className="w-[69px]" />
                                <Combo label="名称" value="KL-1(2)" className="w-[69px]" />
                                <Combo label="分层" value="分层1" className="w-[69px]" />
                            </div>
                            <Sep />
                            <Tool icon="prop" label="属性" /><Tool icon="editbar" label="编辑钢筋" /><Tool icon="list" label="构件列表" /><Tool icon="pick" label="拾取构件" />
                        </div>
                        <div className={`${bar} pr-1`}>
                            <Grip />
                            <Tool icon="twopt" label="两点" /><Tool icon="parallel" label="平行" /><Tool icon="ptangle" label="点角" arrow /><Tool icon="arc3" label="三点辅轴" arrow />
                            <Tool icon="erase" label="删除辅轴" /><Tool icon="dim" label="尺寸标注" arrow />
                        </div>
                    </div>
                    <div className="h-[26px] shrink-0 flex pl-[413px] py-0.5"><div className={`${bar} w-[31px]`}><Grip /></div></div>
                    <div className={`${bar} h-[30px] shrink-0 overflow-hidden`}>
                        <Grip /><Tool icon="cursor" label="选择" active /><span className="pl-0.5 flex"><Arrow /></span><span className="pl-0.5 flex items-center"><Sep /></span>
                        <Tool icon="line" label="直线" /><Tool icon="ptlen" label="点加长度" /><Tool icon="arcdraw" label="三点画弧" arrow />
                        <Combo label="半径" value="" className="w-[58px]" />
                        <Tool icon="rect" label="矩形" /><Sep /><Tool icon="smart" label="智能布置" arrow tight /><Sep /><Tool icon="beamedit" label="修改梁段属性" />
                    </div>
                    <div className="flex-1 min-h-0 overflow-hidden bg-black"><Canvas /></div>
                    <div className="h-[31px] shrink-0 flex pb-px">
                        <div className={bar}>
                            <Grip /><Tool icon="ortho" label="正交" /><Tool icon="snap" label="对象捕捉" active /><Tool icon="dyn" label="动态输入" active />
                        </div>
                        <div className={`${bar} ml-0.5`}>
                            <Grip /><Tool icon="cross" label="交点" /><Tool icon="perp" label="垂点" active /><Tool icon="mid" label="中点" active /><Tool icon="vertex" label="顶点" /><Tool icon="coord" label="坐标" />
                        </div>
                        <div className={`${bar} flex-1 ml-0.5`}>
                            <Grip /><Combo label="偏移方式" value="不偏移" className="w-[58px]" /><Sep />
                            <label className="flex items-center gap-1 pl-0.5 text-[#6d6d6d]">X=<input value={offset} onChange={e => setOffset(e.target.value)} className="w-16 h-5 border border-[#777] bg-[#f0f0f0]" /></label>
                        </div>
                    </div>
                    <div className="h-[202px] shrink-0 flex gap-0.5">
                        <div className="w-[11px] shrink-0 flex flex-col pt-[3px] pb-0.5">
                            <button aria-label="关闭面板" className="size-2.5 bg-[#c9c9c9] border border-[#555]"><svg viewBox="0 0 8 8"><path d="M1 1l6 6M7 1L1 7" stroke="#301010" strokeWidth="1.800" /></svg></button>
                            <div className="flex-1 mt-1 bg-[radial-gradient(#b8b8b8_1px,transparent_1px)] bg-[size:5px_5px]" />
                        </div>
                        <div className="flex-1 min-w-0 flex flex-col">
                            <div className={`${bar} h-[30px] shrink-0 pl-px`}>
                                <Tool icon="copydoc" label="复制跨数据" /><Tool icon="paste" label="粘贴跨数据" disabled /><span className="w-px" />
                                <Tool label="输入当前列数据" disabled /><span className="w-0.5" /><Tool label="删除当前列数据" disabled /><span className="w-0.5" /><Tool label="页面设置" /><span className="w-0.5" /><Tool label="调换起始跨" />
                                <div className="relative">
                                    <button className="h-[23px] px-[5px] bg-[#dbeaf6] border border-[#0078d7] whitespace-nowrap">悬臂钢筋代号</button>
                                    <svg viewBox="0 0 136 44" className="absolute z-20 -left-[22px] -top-[13px] w-[136px] h-11 max-w-none pointer-events-none">
                                        <ellipse cx="68" cy="22" rx="66" ry="20" fill="none" stroke="#ff0000" strokeWidth="2.500" />
                                    </svg>
                                </div>
                            </div>
                            <div className="flex-1 min-h-0 flex flex-col border border-[#a5a5a5] bg-white mr-px mb-px">
                                <SpanTable />
                                <div className="mt-auto h-[15px] mb-px bg-[#f0f0f0] flex items-center">
                                    <svg viewBox="0 0 16 16" className="size-4"><path d="M10 5L7 8l3 3" fill="none" stroke="#404040" strokeWidth="2" /></svg>
                                    <div className="ml-[32%] w-[37%] h-full bg-[#cdcdcd]" />
                                    <svg viewBox="0 0 16 16" className="size-4 ml-auto"><path d="M6 5l3 3-3 3" fill="none" stroke="#404040" strokeWidth="2" /></svg>
                                </div>
                            </div>
                        </div>
                    </div>
                </div>
            </main>

            <div className="h-[22px] shrink-0 flex items-center gap-0.5 [font-family:'Liberation_Serif','Noto_Sans_CJK_SC',serif]">
                <span className={`${cell} w-[148px]`}>X=5360 Y=7355</span>
                <span className={`${cell} w-[78px]`}>层高:3.55m</span>
                <span className={`${cell} w-[98px]`}>底标高:-3.58m</span>
                <span className={`${cell} w-[47px]`}>1(2)</span>
                <span className={`${cell} flex-1`}>按鼠标左键指定第一个角点，或拾取构件图元</span>
                <span className={`${cell} w-[70px]`}>242.6 FPS</span>
            </div>

            <Taskbar />
            <RebarDialog />
            <SpeedBall />
            <ImeBar />
        </div>
    );
}
